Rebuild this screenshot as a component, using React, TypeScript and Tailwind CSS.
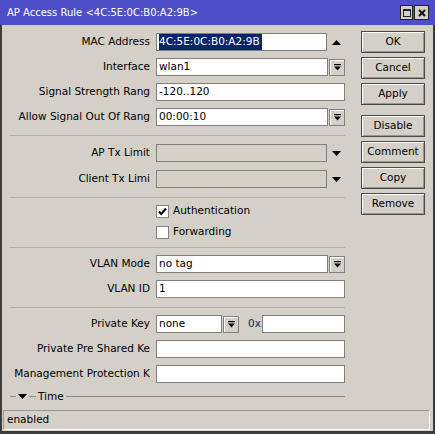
import React from 'react';

const font = { fontFamily: '"DejaVu Sans", Verdana, sans-serif' };

function DropIcon() {
  return (
    <svg width="7" height="7" viewBox="0 0 7 7">
      <rect x="0" y="0" width="7" height="1.2" fill="#000" />
      <polygon points="0,2.5 7,2.5 3.5,6.5" fill="#000" />
    </svg>
  );
}

function DropButton() {
  return (
    <div className="ml-px flex h-[17px] w-[16px] shrink-0 items-center justify-center border border-[#808080] bg-[#d4d0c8] shadow-[inset_1px_1px_0_#ffffff]">
      <DropIcon />
    </div>
  );
}

function Triangle({ up }: { up?: boolean }) {
  return (
    <div className="flex w-[18px] shrink-0 items-center justify-center">
      <svg width="9" height="5" viewBox="0 0 9 5">
        <polygon points={up ? '0,5 9,5 4.5,0' : '0,0 9,0 4.5,5'} fill="#000" />
      </svg>
    </div>
  );
}

function Field({
  value,
  width,
  disabled,
}: {
  value?: React.ReactNode;
  width: string;
  disabled?: boolean;
}) {
  return (
    <div
      className={`flex h-[18px] shrink-0 items-center overflow-hidden border border-[#7f7f7f] pl-[2px] text-[10.5px] whitespace-nowrap ${width} ${
        disabled ? 'bg-[#d4d0c8]' : 'bg-white'
      }`}
    >
      {value}
    </div>
  );
}

function Row({ label, children, className = '' }: { label: string; children: React.ReactNode; className?: string }) {
  return (
    <div className={`flex h-[18px] items-center ${className}`}>
      <div className="w-[140px] shrink-0 overflow-hidden text-right text-[10.5px] whitespace-nowrap">{label}</div>
      <div className="ml-[6px] flex h-[18px] w-[189px] items-center">{children}</div>
    </div>
  );
}

function Separator({ className = '' }: { className?: string }) {
  return <div className={`h-px w-[335px] bg-[#b3afa7] ${className}`} />;
}

function Check({ label, checked, className = '' }: { label: string; checked?: boolean; className?: string }) {
  return (
    <div className={`flex h-[18px] items-center pl-[146px] ${className}`}>
      <div className="flex h-[13px] w-[13px] items-center justify-center border border-[#808080] bg-white">
        {checked && (
          <svg width="9" height="9" viewBox="0 0 9 9">
            <path d="M1 4.5 L3.3 7 L8 1.5" stroke="#000" strokeWidth="2" fill="none" />
          </svg>
        )}
      </div>
      <span className="ml-[4px] text-[10.5px]">{label}</span>
    </div>
  );
}

function Btn({ label, className = '' }: { label: string; className?: string }) {
  return (
    <div
      className={`flex h-[22px] w-[64px] items-center justify-center border border-[#4a4a4a] bg-[#d4d0c8] text-[10.5px] shadow-[inset_1px_1px_0_#ffffff,inset_-1px_-1px_0_#9a968e] ${className}`}
    >
      {label}
    </div>
  );
}

export default function App() {
  return (
    <div className="flex h-[434px] w-[435px] flex-col bg-[#d4d0c8] text-black" style={font}>
      {/* Title bar */}
      <div className="flex h-[25px] shrink-0 items-center bg-[#4e4fc8] pl-[7px] pr-[6px]">
        <span className="text-[10px] text-white">AP Access Rule &lt;4C:5E:0C:B0:A2:9B&gt;</span>
        <div className="ml-auto flex gap-px">
          <div className="flex h-[15px] w-[13px] items-center justify-center border border-[#222] bg-[#d4d0c8]">
            <div className="h-[8px] w-[8px] border border-t-2 border-[#222]" />
          </div>
          <div className="flex h-[15px] w-[15px] items-center justify-center border border-[#222] bg-[#d4d0c8]">
            <svg width="8" height="8" viewBox="0 0 8 8">
              <path d="M1 1 L7 7 M7 1 L1 7" stroke="#111" strokeWidth="2" />
            </svg>
          </div>
        </div>
      </div>

      {/* Body */}
      <div className="flex flex-1 flex-col border-x-2 border-b-[3px] border-[#3c3c3c]">
        <div className="flex">
          {/* Form */}
          <div className="flex w-[343px] flex-col pl-[8px] pt-[8px]">
            <Row label="MAC Address">
              <Field width="w-[171px]" value={<span className="bg-[#0a246a] pr-[2px] text-white">4C:5E:0C:B0:A2:9B</span>} />
              <Triangle up />
            </Row>
            <Row label="Interface" className="mt-[7px]">
              <Field width="w-[172px]" value="wlan1" />
              <DropButton />
            </Row>
            <Row label="Signal Strength Rang" className="mt-[7px]">
              <Field width="w-[189px]" value="-120..120" />
            </Row>
            <Row label="Allow Signal Out Of Rang" className="mt-[7px]">
              <Field width="w-[172px]" value="00:00:10" />
              <DropButton />
            </Row>

            <Separator className="mt-[9px]" />

            <Row label="AP Tx Limit" className="mt-[8px]">
              <Field width="w-[171px]" disabled />
              <Triangle />
            </Row>
            <Row label="Client Tx Limi" className="mt-[8px]">
              <Field width="w-[171px]" disabled />
              <Triangle />
            </Row>

            <Separator className="mt-[9px]" />

            <Check label="Authentication" checked className="mt-[4px]" />
            <Check label="Forwarding" className="mt-[3px]" />

            <Separator className="mt-[6px]" />

            <Row label="VLAN Mode" className="mt-[7px]">
              <Field width="w-[172px]" value="no tag" />
              <DropButton />
            </Row>
            <Row label="VLAN ID" className="mt-[7px]">
              <Field width="w-[189px]" value="1" />
            </Row>

            <Separator className="mt-[9px]" />

            <Row label="Private Key" className="mt-[7px]">
              <Field width="w-[66px]" value="none" />
              <DropButton />
              <span className="ml-[9px] w-[14px] text-[10.5px] text-[#1c1c66]">0x</span>
              <Field width="w-[83px]" />
            </Row>
            <Row label="Private Pre Shared Ke" className="mt-[7px]">
              <Field width="w-[189px]" />
            </Row>
            <Row label="Management Protection K" className="mt-[7px]">
              <Field width="w-[189px]" />
            </Row>

            {/* Time group header */}
            <div className="mt-[8px] flex h-[10px] w-[335px] items-center">
              <div className="h-px w-[6px] bg-[#8a8680]" />
              <svg width="9" height="5" viewBox="0 0 9 5" className="mx-[2px]">
                <polygon points="0,0 9,0 4.5,5" fill="#000" />
              </svg>
              <div className="h-px w-[7px] bg-[#8a8680]" />
              <span className="mx-[2px] text-[10.5px] leading-none">Time</span>
              <div className="h-px flex-1 bg-[#8a8680]" />
            </div>
          </div>

          {/* Buttons */}
          <div className="ml-[16px] flex flex-col gap-[4px] pt-[6px]">
            <Btn label="OK" />
            <Btn label="Cancel" />
            <Btn label="Apply" />
            <Btn label="Disable" className="mt-[6px]" />
            <Btn label="Comment" />
            <Btn label="Copy" />
            <Btn label="Remove" />
          </div>
        </div>

        {/* Status bar */}
        <div className="mt-auto mb-[1px] ml-px mr-[3px] flex h-[20px] items-center border border-[#9a968e] border-b-white border-r-white pl-[3px] text-[10.5px]">
          enabled
        </div>
      </div>
    </div>
  );
}
